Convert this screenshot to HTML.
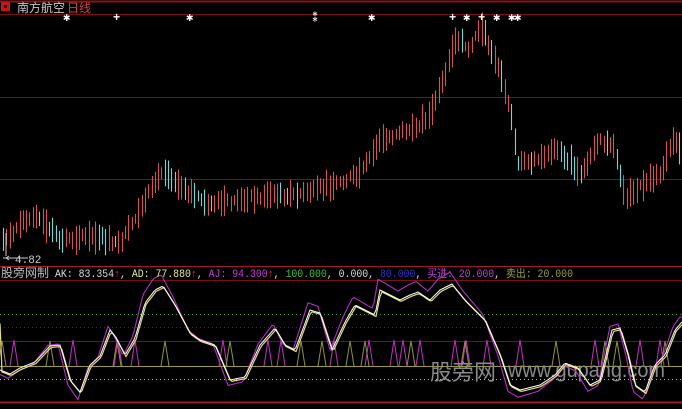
<!DOCTYPE html>
<html><head><meta charset="utf-8"><style>
html,body{margin:0;padding:0;background:#000;width:682px;height:409px;overflow:hidden}
svg{display:block}
.s{font-family:"Liberation Sans","Noto Sans CJK SC",sans-serif}
.m{font-family:"Liberation Mono","Noto Sans CJK SC",monospace}
</style></head><body>
<svg id="s" width="682" height="409" xmlns="http://www.w3.org/2000/svg">
<rect width="682" height="409" fill="#000"/>
<g stroke="#7a1010" stroke-width="1">
<line x1="0" y1="1.5" x2="682" y2="1.5" stroke="#8a1515" stroke-width="2"/>
<line x1="0" y1="14.5" x2="682" y2="14.5"/>
<line x1="0" y1="97.5" x2="682" y2="97.5"/>
<line x1="0" y1="179.5" x2="682" y2="179.5"/>
<line x1="0" y1="266.5" x2="682" y2="266.5" stroke="#a02020"/>
<line x1="0" y1="280.5" x2="682" y2="280.5"/>
<line x1="0" y1="341.5" x2="682" y2="341.5"/>
<line x1="0" y1="402.5" x2="682" y2="402.5" stroke="#a02020" stroke-width="2"/>
</g>
<line x1="0" y1="314.5" x2="682" y2="314.5" stroke="#3c9a3c" stroke-dasharray="1,3"/>
<line x1="0" y1="327.5" x2="682" y2="327.5" stroke="#2a2aa0" stroke-dasharray="1,3"/>
<line x1="0" y1="379.5" x2="682" y2="379.5" stroke="#bbbbbb" stroke-dasharray="1,3"/>
<line x1="0" y1="366.5" x2="682" y2="366.5" stroke="#9a9a40"/>
<g id="candles"></g>
<g id="spikes"></g>
<text class="s" x="430" y="380" font-size="22" fill="#8a8a8a">股旁网</text>
<text class="s" x="508" y="377" font-size="21" fill="#8a8a8a" textLength="157" lengthAdjust="spacingAndGlyphs">www.gupang.com</text>
<g id="lines"></g>
<rect x="1" y="2" width="9" height="9" fill="#c01818"/><rect x="4" y="5" width="3" height="3" fill="#500"/>
<text class="s" x="17" y="12" font-size="12" fill="#c8c8c8">南方航空</text>
<text class="s" x="67" y="12" font-size="12" fill="#d04040">日线</text>
<g id="stars"></g>
<path d="M6,233 V256 M3,258 L28,258 M6,258 l3,-2 M6,258 l3,2" stroke="#ccc" fill="none"/>
<text class="m" x="15" y="263" font-size="11" fill="#ccc">4.82</text>
<text class="s" x="1" y="277" font-size="12" fill="#bbb">股旁网制</text>
<text class="m" y="277" font-size="11" xml:space="preserve" textLength="518" lengthAdjust="spacingAndGlyphs" x="55"><tspan fill="#ddd">AK: 83.354</tspan><tspan fill="#e04040">↑</tspan><tspan fill="#ddd">, </tspan><tspan fill="#e8e890">AD: 77.880</tspan><tspan fill="#e04040">↑</tspan><tspan fill="#ddd">, </tspan><tspan fill="#c040d0">AJ: 94.300</tspan><tspan fill="#e04040">↑</tspan><tspan fill="#ddd">, </tspan><tspan fill="#40c040">100.000</tspan><tspan fill="#ddd">, 0.000, </tspan><tspan fill="#3030d0">80.000</tspan><tspan fill="#ddd">, </tspan><tspan fill="#c040d0">买进: 20.000</tspan><tspan fill="#ddd">, </tspan><tspan fill="#9a9a50">卖出: 20.000</tspan></text>
</svg>
<script>
function interp(pts,x){for(var i=0;i<pts.length-1;i++){if(x>=pts[i][0]&&x<=pts[i+1][0]){var t=(x-pts[i][0])/(pts[i+1][0]-pts[i][0]);return pts[i][1]+t*(pts[i+1][1]-pts[i][1]);}}return pts[pts.length-1][1];}
var P=[[0,245],[20,225],[35,215],[60,240],[90,235],[120,245],[145,200],[162,170],[185,190],[210,205],[240,200],[270,195],[300,195],[330,185],[360,175],[380,140],[410,130],[430,115],[445,75],[455,40],[470,50],[480,25],[495,60],[505,90],[512,120],[517,160],[530,165],[545,155],[560,150],[580,175],[600,140],[615,150],[625,200],[640,185],[660,175],[672,140],[682,150]];
var g=document.getElementById("candles"),h="";
var seed=7;function rnd(){seed=(seed*9301+49297)%233280;return seed/233280;}
for(var x=3;x<682;x+=3.3){var y=interp(P,x);var prev=interp(P,x-3.3);var up=y<prev?true:(rnd()<0.4);var len=12+rnd()*18;var c=up?"#d05555":"#70d8d8";var xx=Math.round(x)+0.5;
h+='<line x1="'+xx+'" x2="'+xx+'" y1="'+(y-len/2+(rnd()-0.5)*8).toFixed(1)+'" y2="'+(y+len/2+(rnd()-0.5)*8).toFixed(1)+'" stroke="'+c+'" stroke-width="1.1"/>';}
g.innerHTML=h;
var A=[[0,370],[10,374],[20,368],[35,362],[50,346],[60,345],[70,380],[80,392],[90,365],[100,356],[110,330],[115,336],[125,355],[135,338],[145,303],[155,290],[163,286],[175,305],[190,333],[200,340],[215,345],[230,380],[245,377],[260,345],[275,328],[285,345],[295,350],[310,310],[320,313],[332,350],[345,322],[355,305],[375,315],[380,290],[390,295],[400,300],[410,295],[418,292],[430,300],[440,290],[452,284],[465,300],[475,310],[485,320],[500,355],[510,385],[520,390],[540,385],[555,375],[565,363],[578,368],[590,385],[600,380],[612,330],[620,328],[628,355],[635,385],[645,392],[655,365],[665,355],[675,330],[682,322]];
function path(f,dx){var d="";for(var x=0;x<=682;x+=2){var y=f(interp(A,x-dx));d+=(x?"L":"M")+x+","+y.toFixed(1);}return d;}
var L=document.getElementById("lines");
L.innerHTML='<path d="'+path(function(y){return 350+(y-350)*1.18;},-2)+'" stroke="#b030c0" stroke-width="1.1" fill="none"/>'+
'<path d="'+path(function(y){return y+1.5;},1)+'" stroke="#e8e070" stroke-width="1.2" fill="none"/>'+
'<path d="'+path(function(y){return y;},0)+'" stroke="#ffffff" stroke-width="1" fill="none"/>';
var S=document.getElementById("spikes"),sh="";
var mag=[14,73,118,135,223,268,281,334,369,394,403,420,455,466,487,520,595,640,660];
var olv=[2,50,117,165,230,301,322,350,365,411,465,556,605,617,665];
mag.forEach(function(x){sh+='<path d="M'+(x-4)+',366 L'+x+',340 L'+(x+4)+',366" stroke="#c030c0" fill="none"/>';});
olv.forEach(function(x){sh+='<path d="M'+(x-4)+',366 L'+x+',341 L'+(x+4)+',366" stroke="#909040" fill="none"/>';});
S.innerHTML=sh;
var st=document.getElementById("stars"),s2="";
[[67,"✱"],[117,"+"],[190,"✱"],[313,"⁑"],[372,"✱"],[453,"+"],[467,"✱"],[482,"+"],[497,"✱"],[512,"✱"],[518,"✱"]].forEach(function(a){s2+='<text class="m" x="'+(a[0]-4)+'" y="21" font-size="12" fill="#fff" font-weight="bold">'+a[1]+'</text>';});
st.innerHTML=s2;
</script>
</body></html>
